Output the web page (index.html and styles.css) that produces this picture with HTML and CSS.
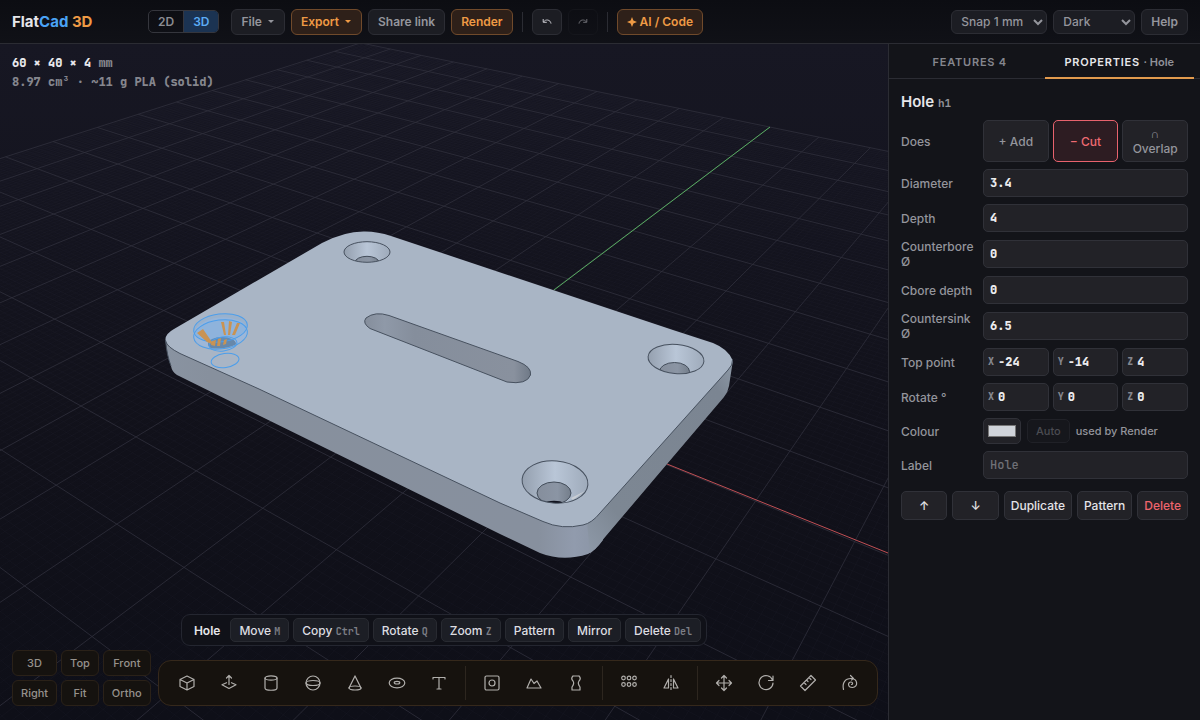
FILE: index.html
```html
<!DOCTYPE html>
<html lang="en">
<head>
<meta charset="utf-8">
<title>FlatCad 3D</title>
<link rel="stylesheet" href="styles.css">
</head>
<body>
<header class="topbar">
  <div class="logo">Flat<span class="logo-cad">Cad</span> <span class="logo-3d">3D</span></div>
  <div class="mode" role="group" aria-label="Mode"><button type="button">2D</button><button type="button" class="on">3D</button></div>
  <nav class="actions">
    <button type="button" class="btn">File <i class="caret"></i></button>
    <button type="button" class="btn accent">Export <i class="caret"></i></button>
    <button type="button" class="btn">Share link</button>
    <button type="button" class="btn accent">Render</button>
    <span class="vsep"></span>
    <button type="button" class="btn square" aria-label="Undo"><svg width="12" height="8" viewBox="0 0 12 8"><path d="M2.500 4C4.500 .8 9.500 1.500 10 5.600M2.200 1V4.300H5.800"/></svg></button>
    <button type="button" class="btn square" aria-label="Redo" disabled><svg width="12" height="8" viewBox="0 0 12 8"><path d="M9.500 4C7.500 .8 2.500 1.500 2 5.600M9.800 1V4.300H6.200"/></svg></button>
    <span class="vsep"></span>
    <button type="button" class="btn accent"><svg class="spark" width="10" height="10" viewBox="0 0 10 10"><path d="M5 0L6.400 3.600L10 5L6.400 6.400L5 10L3.600 6.400L0 5L3.600 3.600Z"/></svg>AI / Code</button>
  </nav>
  <div class="prefs">
    <select class="btn snap" aria-label="Snap"><option>Snap 1 mm</option></select>
    <select class="btn theme" aria-label="Theme"><option>Dark</option></select>
    <button type="button" class="btn help">Help</button>
  </div>
</header>
<div class="workspace">
<main class="viewport">
  <svg class="scene" viewBox="0 44 888 676" preserveAspectRatio="xMidYMid slice" role="img" aria-label="Plate model">
    <defs>
      <linearGradient id="front" x1="0" y1="0" x2="1" y2="0"><stop offset="0" stop-color="#8993a1"/><stop offset=".1" stop-color="#87909d"/><stop offset=".85" stop-color="#87909e"/><stop offset=".93" stop-color="#919bad"/><stop offset="1" stop-color="#8993a3"/></linearGradient>
      <linearGradient id="side" x1="0" y1="1" x2="1" y2="0"><stop offset="0" stop-color="#8e99a8"/><stop offset=".2" stop-color="#7d8793"/><stop offset=".85" stop-color="#7b8592"/><stop offset="1" stop-color="#929eac"/></linearGradient>
      <linearGradient id="cone" x1="0" y1="0" x2="1" y2="0"><stop offset="0" stop-color="#929dac"/><stop offset=".5" stop-color="#b9c6d7"/><stop offset="1" stop-color="#9da9b9"/></linearGradient>
      <linearGradient id="bore" x1="0" y1="0" x2="1" y2="0"><stop offset="0" stop-color="#858e9c"/><stop offset=".6" stop-color="#8b95a4"/><stop offset="1" stop-color="#747e8b"/></linearGradient>
      <linearGradient id="slot" x1="0" y1="0" x2="1" y2="0"><stop offset="0" stop-color="#858e9c"/><stop offset=".12" stop-color="#8f99a8"/><stop offset=".3" stop-color="#858e9c"/><stop offset=".9" stop-color="#89919e"/><stop offset="1" stop-color="#6f7987"/></linearGradient>
      <clipPath id="c1"><ellipse cx="367" cy="252" rx="23" ry="10.300"/></clipPath>
      <clipPath id="c2"><ellipse cx="676" cy="359" rx="28" ry="14.500" transform="rotate(5 676 359)"/></clipPath>
      <clipPath id="c3"><ellipse cx="555" cy="482" rx="33" ry="21" transform="rotate(5 555 482)"/></clipPath>
      <clipPath id="c4"><ellipse cx="220.500" cy="333" rx="27" ry="15.500" transform="rotate(-6 220 333)"/></clipPath>
    </defs>
    <path id="grid-minor" class="minor"/>
    <path id="grid-major" class="major"/>
    <path class="axis-y" d="M554 290L770 127"/>
    <path class="axis-x" d="M667 464L888 553"/>
    <path fill="url(#front)" d="M165.500 340Q167 356 171 366Q172 372 177 375L500 534L540 553Q563 562 588 554Q596 550 603 540L605 510Z"/>
    <path fill="url(#side)" d="M587 523L590 553Q596 549 600 543L667 464L724 397Q728 392 729 386L733 360L715 350Z"/>
    <path fill="#a9b5c5" d="M174 329L322 243Q345 231 365 231.500Q378 231.500 391 236L673 330L713 343Q728 349 732.500 360Q733 365 728 370L600 513Q592 523 583 525Q562 530 543 521.500L500 503L259 389L180 353.500Q167 347 165.500 340Q165 334 174 329Z"/>
    <path class="edge" d="M165.500 341Q167 347 180 353.500L259 389L500 503L543 521.500Q562 530 583 525Q592 523 600 513L728 370Q733 365 732.500 360M165.500 340Q167 356 171 366"/>
    <path class="edge slot" d="M389 315.500L518 361.500Q532 367 530.500 375Q527 385 507 382L370 328.500Q362 323 366 318Q375 311 389 315.500Z"/>
    <g clip-path="url(#c1)"><rect x="343" y="240" width="48" height="24" fill="url(#cone)"/><ellipse class="rim" cx="367" cy="262.500" rx="12" ry="6.200"/></g>
    <ellipse class="edge" cx="367" cy="252" rx="23" ry="10.300"/>
    <g clip-path="url(#c2)"><rect x="646" y="340" width="60" height="38" fill="url(#cone)"/><ellipse class="rim" cx="674.500" cy="371.500" rx="15" ry="9"/></g>
    <ellipse class="edge" cx="676" cy="359" rx="28" ry="14.500" transform="rotate(5 676 359)"/>
    <g clip-path="url(#c3)"><rect x="520" y="458" width="70" height="48" fill="url(#cone)"/><ellipse class="rim" cx="554" cy="493" rx="17" ry="11"/><ellipse cx="554" cy="502.500" rx="8" ry="1.800" fill="#11131f"/><path d="M571 498L585 491L573 500Z" fill="#c8cdd3"/></g>
    <ellipse class="edge" cx="555" cy="482" rx="33" ry="21" transform="rotate(5 555 482)"/>
    <g clip-path="url(#c4)"><rect x="192" y="316" width="58" height="36" fill="#a6bad5"/><ellipse cx="222" cy="344" rx="14" ry="7" fill="#6b86a3"/></g>
    <g class="select"><ellipse cx="220.500" cy="328" rx="27" ry="14" transform="rotate(-7 220 328)" fill="#48a0f32a"/><ellipse cx="220.500" cy="334.500" rx="27" ry="14.500" transform="rotate(-7 220 334)" fill="#48a0f318"/><ellipse cx="223" cy="344" rx="14" ry="7" transform="rotate(-7 223 344)" fill="none"/><ellipse cx="225" cy="360.500" rx="14" ry="7" transform="rotate(-8 225 360)" fill="none"/></g>
    <path fill="#c99353" d="M197 333L203 329L214 345L207 342ZM221 322L224 322L226 335L224 335ZM229 321L232 322L230 335L228 335ZM237 323L240 323L235 335L232 335ZM212 341L216 340L215 346L211 345ZM218 339L221 338L220 346L217 346ZM224 340L227 339L226 344L223 345Z"/>
  </svg>
  <div class="stats"><div class="dims">60 × 40 × 4 <span>mm</span></div><div>8.97 cm³ · ~11 g PLA (solid)</div></div>
  <div class="dock">
    <div class="context">
      <strong>Hole</strong>
      <button type="button">Move <kbd>M</kbd></button><button type="button">Copy <kbd>Ctrl</kbd></button><button type="button">Rotate <kbd>Q</kbd></button><button type="button">Zoom <kbd>Z</kbd></button><button type="button">Pattern</button><button type="button">Mirror</button><button type="button">Delete <kbd>Del</kbd></button>
    </div>
    <div class="bottom">
      <div class="views"><button type="button">3D</button><button type="button">Top</button><button type="button">Front</button><button type="button">Right</button><button type="button">Fit</button><button type="button">Ortho</button></div>
      <div class="tools">
        <button type="button" aria-label="Box"><svg viewBox="0 0 18 18"><path d="M9 2L16 5.500V12.500L9 16L2 12.500V5.500ZM2 5.500L9 9L16 5.500M9 9V16"/></svg></button>
        <button type="button" aria-label="Extrude"><svg viewBox="0 0 18 18"><path d="M6.500 4L9 1.500L11.500 4M9 2V10.500M6.500 8.700L2 10.700L9 14.500L16 10.700L11.500 8.700"/></svg></button>
        <button type="button" aria-label="Cylinder"><svg viewBox="0 0 18 18"><ellipse cx="9" cy="4" rx="6" ry="2.200"/><path d="M3 4V14C3 17 15 17 15 14V4"/></svg></button>
        <button type="button" aria-label="Sphere"><svg viewBox="0 0 18 18"><circle cx="9" cy="9" r="7"/><ellipse cx="9" cy="9" rx="7" ry="2.500"/></svg></button>
        <button type="button" aria-label="Cone"><svg viewBox="0 0 18 18"><path d="M9 2L3 14M9 2L15 14"/><ellipse cx="9" cy="14" rx="6" ry="2"/></svg></button>
        <button type="button" aria-label="Torus"><svg viewBox="0 0 18 18"><ellipse cx="9" cy="9" rx="7.800" ry="4.800"/><ellipse cx="9" cy="8.700" rx="2.800" ry="1.300"/></svg></button>
        <button type="button" aria-label="Text"><svg viewBox="0 0 18 18"><path d="M3 5V3.500H15V5M9 3.500V15M7 15H11"/></svg></button>
        <span class="tsep"></span>
        <button type="button" aria-label="Hole"><svg viewBox="0 0 18 18"><rect x="2" y="2" width="14" height="14" rx="1.500"/><circle cx="9" cy="9" r="3"/></svg></button>
        <button type="button" aria-label="Sketch"><svg viewBox="0 0 18 18"><path d="M2 14L6 5L9 9.500L12 7L16 14Z"/></svg></button>
        <button type="button" aria-label="Revolve"><svg viewBox="0 0 18 18"><path d="M6 2H12M5 16H13M6 2C4 4 4.500 5.500 6 7C7.500 9 6.500 11 5 13V16M12 2C14 4 13.500 5.500 12 7C10.500 9 11.500 11 13 13V16"/></svg></button>
        <span class="tsep"></span>
        <button type="button" aria-label="Pattern"><svg viewBox="0 0 18 18"><circle cx="3.500" cy="4" r="1.800"/><circle cx="9" cy="4" r="1.800"/><circle cx="14.500" cy="4" r="1.800"/><circle cx="3.500" cy="10.500" r="1.800"/><circle cx="9" cy="10.500" r="1.800"/><circle cx="14.500" cy="10.500" r="1.800"/></svg></button>
        <button type="button" aria-label="Mirror"><svg viewBox="0 0 18 18"><path d="M9 1.500V16.500" stroke-dasharray="2 2"/><path d="M6.500 5V14H2ZM11.500 5V14H16Z"/></svg></button>
        <span class="tsep"></span>
        <button type="button" aria-label="Move"><svg viewBox="0 0 18 18"><path d="M9 1.500V16.500M1.500 9H16.500M6.500 4L9 1.500L11.500 4M6.500 14L9 16.500L11.500 14M4 6.500L1.500 9L4 11.500M14 6.500L16.500 9L14 11.500"/></svg></button>
        <button type="button" aria-label="Rotate"><svg viewBox="0 0 18 18"><path d="M15.500 6A7 7 0 1 0 16 9M16 2V6.500H11.500"/></svg></button>
        <button type="button" aria-label="Measure"><svg viewBox="0 0 18 18"><path d="M12 1.500L16.500 6L6 16.500L1.500 12ZM5 8.500L7 10.500M7.500 6L9 7.500M10 3.500L12 5.500"/></svg></button>
        <button type="button" aria-label="Spiral"><svg viewBox="0 0 18 18"><path d="M2.500 15.500C1 9 4 4.500 10 4.500C17 4.500 17.500 13 11.500 13.500C6.500 13.500 6.500 8 10 8C12 8 12 10.500 10.500 10.500M9.500 1.500L12.500 4.500L10.500 6"/></svg></button>
      </div>
    </div>
  </div>
</main>
<aside class="panel">
  <div class="tabs" role="tablist"><button type="button" role="tab">FEATURES 4</button><button type="button" role="tab" class="on" aria-selected="true">PROPERTIES <span>· Hole</span></button></div>
  <form class="props">
    <h2>Hole <code>h1</code></h2>
    <div class="row"><span class="name">Does</span><div class="three ops"><button type="button">+ Add</button><button type="button" class="cut">− Cut</button><button type="button">∩ Overlap</button></div></div>
    <div class="row"><label for="dia">Diameter</label><input id="dia" value="3.4"></div>
    <div class="row"><label for="depth">Depth</label><input id="depth" value="4"></div>
    <div class="row"><label for="cb">Counterbore Ø</label><input id="cb" value="0"></div>
    <div class="row"><label for="cbd">Cbore depth</label><input id="cbd" value="0"></div>
    <div class="row"><label for="cs">Countersink Ø</label><input id="cs" value="6.5"></div>
    <div class="row"><span class="name">Top point</span><div class="three"><label class="axis"><span>X</span><input value="-24"></label><label class="axis"><span>Y</span><input value="-14"></label><label class="axis"><span>Z</span><input value="4"></label></div></div>
    <div class="row"><span class="name">Rotate °</span><div class="three"><label class="axis"><span>X</span><input value="0"></label><label class="axis"><span>Y</span><input value="0"></label><label class="axis"><span>Z</span><input value="0"></label></div></div>
    <div class="row"><label for="col">Colour</label><div class="colour"><input id="col" type="color" value="#d0d4da"><button type="button" disabled>Auto</button><small>used by Render</small></div></div>
    <div class="row"><label for="lab">Label</label><input id="lab" placeholder="Hole"></div>
    <div class="ends"><button type="button" class="arrow" aria-label="Move up">↑</button><button type="button" class="arrow" aria-label="Move down">↓</button><button type="button">Duplicate</button><button type="button">Pattern</button><button type="button" class="danger">Delete</button></div>
  </form>
</aside>
</div>
<script src="grid.js"></script>
</body>
</html>
```
FILE: styles.css
```css
* { box-sizing: border-box; }
:root { color-scheme: dark; --mono: "JetBrains Mono", "DejaVu Sans Mono", monospace; --line: #2b2c33; --muted: #94959c; }
body { margin: 0; height: 100vh; display: flex; flex-direction: column; background: #101117; color: #e6e6ea; font: 500 12px/15px Inter, sans-serif; overflow: hidden; }
button, input, select { font: inherit; color: inherit; margin: 0; }
button { cursor: pointer; white-space: nowrap; }

.topbar { display: flex; align-items: center; height: 44px; padding: 0 12px; background: linear-gradient(#0c0d12, #101117); border-bottom: 1px solid var(--line); }
.logo { width: 136px; font-size: 15px; font-weight: 700; line-height: 20px; }
.logo-cad { color: #4aa3f5; }
.logo-3d { color: #ee9a45; }
.mode { display: flex; margin-right: 12px; border: 1px solid #35363d; border-radius: 5px; overflow: hidden; }
.mode button { height: 21px; padding: 0 9px; border: 0; background: none; color: #8b8c92; font-weight: 600; }
.mode .on { background: #1b3352; color: #5cacf5; border-left: 1px solid #35363d; }
.actions, .prefs { display: flex; align-items: center; gap: 6px; }
.prefs { margin-left: auto; }
.btn { height: 26px; padding: 0 9px; border: 1px solid #2c2d34; border-radius: 6px; background: #1c1d23; color: var(--muted); font-weight: 600; display: flex; align-items: center; }
.accent { background: #2e2019; border-color: #704a2b; color: #ee9a45; }
.caret { border: 3px solid transparent; border-top-color: currentColor; border-bottom: 0; margin: 0 1px 0 6px; }
.square { width: 30px; justify-content: center; padding: 0; }
.square svg { fill: none; stroke: #c6c6cc; stroke-width: 1; }
.square:disabled { background: none; border-color: #1b1c22; opacity: .5; }
.vsep { width: 1px; height: 20px; margin: 0 3px; background: var(--line); }
.spark { fill: currentColor; margin-right: 3px; }
select.btn { height: 24px; padding: 0 0 0 5px; font-weight: 500; }
.snap { width: 96px; }
.theme { width: 82px; }
.help { font-weight: 600; }

.workspace { flex: 1; display: flex; min-height: 0; }
.viewport { position: relative; flex: 1; min-width: 0; background: linear-gradient(#171723, #11111a 60%, #0e0f18); overflow: hidden; }
.scene { display: block; width: 100%; height: 100%; }
.minor, .major, .axis-x, .axis-y { fill: none; }
.minor { stroke: #2b2c3c; stroke-opacity: .13; }
.major { stroke: #30303c; stroke-opacity: .8; }
.axis-x { stroke: #c05055; }
.axis-y { stroke: #58ad61; }
.edge { stroke: #47515f; stroke-width: 1; fill: none; }
.slot { fill: url(#slot); }
.rim { fill: url(#bore); stroke: #434d5a; }
.select { stroke: #4c9eeb; stroke-width: 1; }
.stats { position: absolute; top: 10px; left: 12px; font: 800 12px/19px var(--mono); color: #85868e; }
.dims { color: #e8e8ec; }
.dims span { color: #85868e; }
.dock { position: absolute; left: 0; right: 0; bottom: 14px; display: flex; flex-direction: column; gap: 14px; pointer-events: none; }
.dock button { pointer-events: auto; }
.context { align-self: center; display: flex; align-items: center; gap: 4px; padding: 3px 5px 3px 12px; border: 1px solid #242630; border-radius: 9px; background: #101118; }
.context strong { font-weight: 600; margin-right: 6px; }
.context button { height: 24px; padding: 0 8px; border: 1px solid #282a31; border-radius: 5px; background: #1c1e25; color: #dddde1; }
kbd { font: 700 10px var(--mono); color: #7c7e86; }
.bottom { display: flex; align-items: flex-end; justify-content: space-between; height: 46px; padding: 0 10px 0 12px; }
.views { display: grid; grid-template-columns: auto auto auto; gap: 4px; }
.views button { height: 26px; padding: 0 8px; border: 1px solid #2a2118; border-radius: 6px; background: #15120f; color: #95918c; font-size: 11px; }
.tools { display: flex; align-items: center; gap: 4px; height: 46px; padding: 0 8px 0 9px; border: 1px solid #35281b; border-radius: 13px; background: #16120e; }
.tools button { width: 38px; height: 38px; padding: 10px; border: 0; background: none; }
.tools svg { display: block; width: 18px; height: 18px; fill: none; stroke: #b1afac; stroke-width: 1.2; stroke-linejoin: round; stroke-linecap: round; }
.tsep { width: 1px; height: 34px; margin: 0 3px; background: #2d261f; }

.panel { width: 312px; border-left: 1px solid var(--line); background: #131419; }
.tabs { display: grid; grid-template-columns: 1fr 1fr; height: 35px; padding: 0 6px; border-bottom: 1px solid var(--line); }
.tabs button { height: 35px; padding: 3px 0 0; border: 0; border-bottom: 2px solid transparent; background: none; color: #85868e; font-size: 11px; font-weight: 600; letter-spacing: .07em; }
.tabs .on { color: #e6e6ea; border-color: #e29a4d; }
.tabs span { color: #909198; letter-spacing: 0; }
.props { display: flex; flex-direction: column; gap: 7px; padding: 13px 12px; }
h2 { margin: 0 0 1px; font-size: 15px; line-height: 20px; font-weight: 600; }
code { font: 700 11px var(--mono); color: #93949b; }
.row { display: grid; grid-template-columns: 74px minmax(0, 1fr); gap: 8px; align-items: center; color: var(--muted); }
.row input { width: 100%; height: 28px; padding: 0 6px; border: 1px solid #303138; border-radius: 5px; background: #222227; color: #ebebee; font: 800 12px var(--mono); }
.row input::placeholder { color: #707177; font-weight: 500; opacity: 1; }
.three { display: grid; grid-template-columns: repeat(3, minmax(0, 1fr)); gap: 4px; }
.ops button { height: 42px; padding: 0 4px; border: 1px solid #303138; border-radius: 5px; background: #222227; white-space: normal; }
.ops .cut { background: #2d1c22; border-color: #e8626d; color: #ef6a72; }
.axis { position: relative; }
.axis span { position: absolute; left: 5px; top: 7px; font: 800 10px/14px var(--mono); color: #85868d; }
.row .axis input { padding-left: 14px; }
.colour { display: flex; align-items: center; gap: 6px; font-size: 11px; }
.row .colour input { width: 38px; height: 26px; padding: 2px; }
.colour button { height: 24px; padding: 0 8px; border: 1px solid #202127; border-radius: 5px; background: #16171c; color: #4b4c52; }
.colour small { font-size: 11px; }
.ends { display: flex; gap: 5px; margin-top: 5px; }
.ends button { height: 29px; padding: 0 6px; border: 1px solid #303138; border-radius: 5px; background: #222227; color: #e4e4e8; }
.ends .arrow { flex: 1; }
.ends .danger { color: #ee656d; }
```
FILE: grid.js
```js
// Ground plane in millimetres, projected with the scene camera.
const EXTENT = 110;
const NEAR = 0.05;
const depth = (x, y) => 1 - 0.00422 * x + 0.00595 * y;
const project = (x, y) => {
  const w = depth(x, y);
  return [(442.6 + 4.634 * x + 7.558 * y) / w, (373.1 + 1.085 * x - 1.481 * y) / w];
};

function segment(x0, y0, x1, y1) {
  const w0 = depth(x0, y0);
  const w1 = depth(x1, y1);
  if (w0 < NEAR && w1 < NEAR) return "";
  const t = (NEAR - w0) / (w1 - w0);
  const cut = [x0 + (x1 - x0) * t, y0 + (y1 - y0) * t];
  const a = project(...(w0 < NEAR ? cut : [x0, y0]));
  const b = project(...(w1 < NEAR ? cut : [x1, y1]));
  return "M" + a.map(n => n.toFixed(1)) + "L" + b.map(n => n.toFixed(1));
}

let minor = "";
let major = "";
for (let i = -EXTENT; i <= EXTENT; i++) {
  const lines = segment(i, -EXTENT, i, EXTENT) + segment(-EXTENT, i, EXTENT, i);
  if (i % 10 === 0) major += lines;
  else minor += lines;
}
document.getElementById("grid-minor").setAttribute("d", minor);
document.getElementById("grid-major").setAttribute("d", major);
```
